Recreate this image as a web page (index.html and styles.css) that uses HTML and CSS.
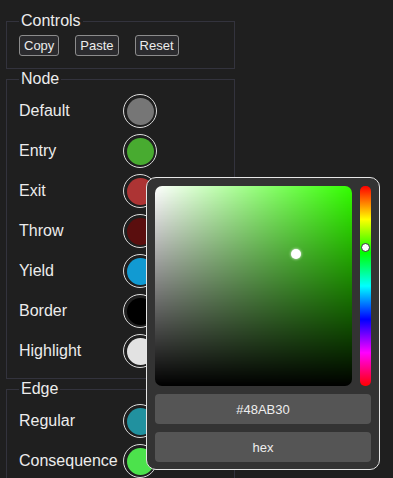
FILE: index.html
```html
<!DOCTYPE html>
<html lang="en">
<head>
    <meta charset="UTF-8">
    <meta name="viewport" content="width=device-width, initial-scale=1.0">
    <title>Graph Colors</title>
    <link rel="stylesheet" href="styles.css">
</head>
<body>

    <div id="panel">
        <!-- Controls -->
        <fieldset class="group controls">
            <legend>Controls</legend>
            <div class="button-row">
                <button class="small-btn">Copy</button>
                <button class="small-btn">Paste</button>
                <button class="small-btn">Reset</button>
            </div>
        </fieldset>

        <!-- Node colors -->
        <fieldset class="group">
            <legend>Node</legend>
            <div class="color-row"><span class="label">Default</span><span class="swatch" style="background-color:#767676"></span></div>
            <div class="color-row"><span class="label">Entry</span><span class="swatch" style="background-color:#48ab30"></span></div>
            <div class="color-row"><span class="label">Exit</span><span class="swatch" style="background-color:#ad3434"></span></div>
            <div class="color-row"><span class="label">Throw</span><span class="swatch" style="background-color:#5a0e0e"></span></div>
            <div class="color-row"><span class="label">Yield</span><span class="swatch" style="background-color:#119ad2"></span></div>
            <div class="color-row"><span class="label">Border</span><span class="swatch" style="background-color:#000000"></span></div>
            <div class="color-row"><span class="label">Highlight</span><span class="swatch" style="background-color:#e2e2e2"></span></div>
        </fieldset>

        <!-- Edge colors -->
        <fieldset class="group">
            <legend>Edge</legend>
            <div class="color-row"><span class="label">Regular</span><span class="swatch" style="background-color:#21919f"></span></div>
            <div class="color-row"><span class="label">Consequence</span><span class="swatch" style="background-color:#4ce24c"></span></div>
        </fieldset>
    </div>

    <!-- Color picker popup -->
    <div class="picker">
        <div class="picker-top">
            <div class="saturation">
                <span class="sat-thumb"></span>
            </div>
            <div class="hue">
                <span class="hue-thumb"></span>
            </div>
        </div>
        <div class="picker-field">#48AB30</div>
        <div class="picker-field">hex</div>
    </div>

</body>
</html>
```

FILE: styles.css
```css
* {
    box-sizing: border-box;
}

html {
    overflow: hidden;
}

body {
    margin: 0;
    background: #1f1f1f;
    color: #ececec;
    font-family: "Liberation Sans", Arial, sans-serif;
    font-size: 16px;
}

#panel {
    width: 229px;
    margin: 12px 0 0 6px;
}

.group {
    margin: 0 0 1px 0;
    padding: 3px 12px 7px;
    border: 1px solid #33333d;
}

.group legend {
    padding: 0 2px;
    font-size: 16px;
}

.controls {
    padding-top: 5px;
    padding-bottom: 12px;
}

.button-row {
    display: flex;
    gap: 16px;
}

.small-btn {
    height: 21px;
    padding: 0 4px;
    background: #2b2b2e;
    border: 1px solid #8c8c8c;
    border-radius: 3px;
    color: #ececec;
    font-family: "Liberation Sans", Arial, sans-serif;
    font-size: 13px;
}

.color-row {
    display: flex;
    align-items: center;
    height: 40px;
}

.label {
    width: 104px;
}

.swatch {
    width: 34px;
    height: 34px;
    border: 1.5px solid #dcdcdc;
    border-radius: 50%;
    padding: 2.5px;
    background-clip: content-box;
}

/* Color picker */
.picker {
    position: absolute;
    left: 146px;
    top: 177px;
    width: 234px;
    height: 293px;
    padding: 8px;
    background: #333333;
    border: 1px solid #e6e6e6;
    border-radius: 10px;
}

.picker-top {
    display: flex;
    gap: 8px;
    height: 200px;
    margin-bottom: 8px;
}

.saturation {
    position: relative;
    width: 199px;
    border-radius: 7px;
    background:
        linear-gradient(to top, #000, rgba(0, 0, 0, 0)),
        linear-gradient(to right, #fff, #33ff00);
}

.sat-thumb {
    position: absolute;
    left: 136px;
    top: 63px;
    width: 10px;
    height: 10px;
    border-radius: 50%;
    background: #fff;
    box-shadow: 0 0 3px rgba(255, 255, 255, 0.9);
}

.hue {
    position: relative;
    width: 11px;
    border-radius: 5px;
    background: linear-gradient(to bottom, #ff0000, #ffff00, #00ff00, #00ffff, #0000ff, #ff00ff, #ff0000);
}

.hue-thumb {
    position: absolute;
    left: 1px;
    top: 57px;
    width: 9px;
    height: 9px;
    border-radius: 50%;
    background: #fff;
    border: 1px solid #333;
}

.picker-field {
    height: 30px;
    margin-bottom: 8px;
    background: #555555;
    border-radius: 4px;
    display: flex;
    align-items: center;
    justify-content: center;
    font-size: 13px;
    color: #eeeeee;
}
```
